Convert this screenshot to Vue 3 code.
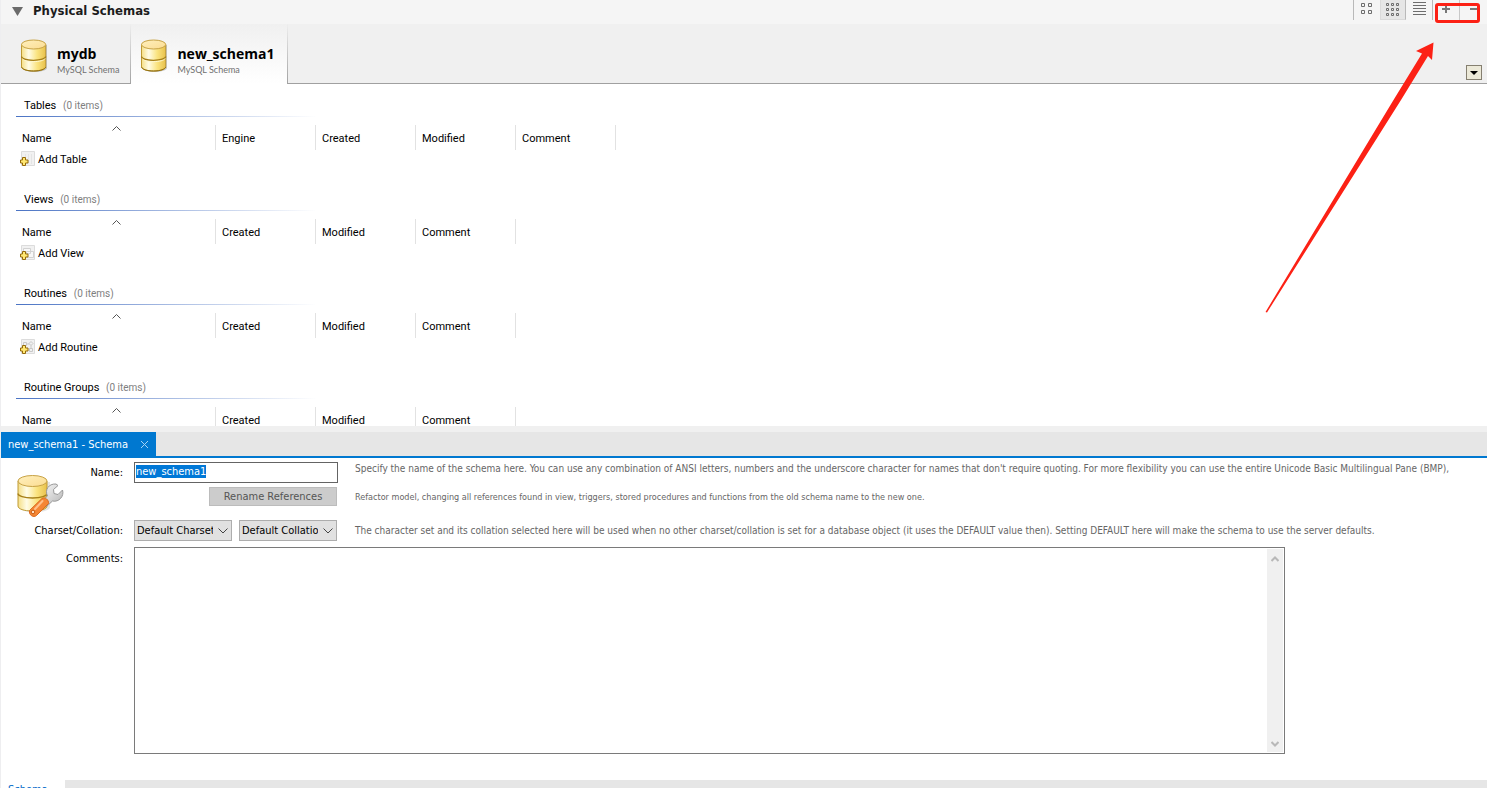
<script setup>
import { onMounted, ref } from 'vue'

const schemas = [
  { name: 'mydb', active: false },
  { name: 'new_schema1', active: true },
]

const sections = [
  { title: 'Tables', columns: ['Engine', 'Created', 'Modified', 'Comment'], add: 'Add Table', kind: 'table' },
  { title: 'Views', columns: ['Created', 'Modified', 'Comment'], add: 'Add View', kind: 'view' },
  { title: 'Routines', columns: ['Created', 'Modified', 'Comment'], add: 'Add Routine', kind: 'routine' },
  { title: 'Routine Groups', columns: ['Created', 'Modified', 'Comment'] },
]

const schemaName = ref('new_schema1')
const nameInput = ref(null)

onMounted(() => {
  nameInput.value.focus({ preventScroll: true })
  nameInput.value.select()
})
</script>

<template>
  <div class="workbench">
    <svg class="defs" width="0" height="0" aria-hidden="true">
      <defs>
        <linearGradient id="goldSide" x1="0" x2="1" y1="0" y2="0">
          <stop offset="0" stop-color="#f5df86" />
          <stop offset=".3" stop-color="#fffce6" />
          <stop offset=".65" stop-color="#fae37f" />
          <stop offset="1" stop-color="#e8c14b" />
        </linearGradient>
        <linearGradient id="goldTop" x1="0" x2="1" y1="0" y2="1">
          <stop offset="0" stop-color="#fff0bd" />
          <stop offset="1" stop-color="#fbdc92" />
        </linearGradient>
        <linearGradient id="steel" x1="0" x2="1" y1="0" y2="1">
          <stop offset="0" stop-color="#fafafa" />
          <stop offset="1" stop-color="#b4b4b4" />
        </linearGradient>
        <symbol id="cylinder" viewBox="0 0 28 34">
          <path d="M3 6v23c0 2 5 4 11.500 4S27 31 27 29V6z" fill="#000" opacity=".2" />
          <path d="M1.500 5.500v22.500c0 2.200 5 4 12 4s12.200-1.800 12.200-4V5.500z" fill="url(#goldSide)" stroke="#bf9a34" />
          <path d="M1.500 17.500c0 2.200 5 3.800 12 3.800s12.200-1.600 12.200-3.800" fill="none" stroke="#a67f18" stroke-width="1.300" />
          <path d="M2.300 19.500c1 2 5.500 3.100 11.300 3.100s10.500-1.100 11.500-3.100" fill="none" stroke="#fff8cf" />
          <ellipse cx="13.600" cy="5.500" rx="12.100" ry="4.500" fill="url(#goldTop)" stroke="#c7a245" />
          <path d="M1.600 28c.6 2.200 5.400 4 12 4s11.500-1.800 12.100-4" fill="none" stroke="#93700f" />
        </symbol>
      </defs>
    </svg>

    <section class="schemas">
      <header class="bar">
        <button class="collapse" type="button" aria-label="Collapse">
          <svg width="11" height="9"><path d="M0 0h11L5.500 9z" fill="#6b6b6b" /></svg>
        </button>
        <h1>Physical Schemas</h1>
        <div class="tools">
          <button class="tool" type="button" aria-label="Large icons">
            <svg width="12" height="12" fill="none" stroke="#6e6e6e">
              <path d="M.5 1.500h3v3h-3zM7.500 1.500h3v3h-3zM.5 8.500h3v3h-3zM7.500 8.500h3v3h-3z" />
            </svg>
          </button>
          <button class="tool pressed" type="button" aria-label="Small icons">
            <svg width="14" height="14" fill="none" stroke="#6e6e6e">
              <path d="M.5 1.500h2v2h-2zM5.500 1.500h2v2h-2zM10.500 1.500h2v2h-2zM.5 6.500h2v2h-2zM5.500 6.500h2v2h-2zM10.500 6.500h2v2h-2zM.5 11.500h2v2h-2zM5.500 11.500h2v2h-2zM10.500 11.500h2v2h-2z" />
            </svg>
          </button>
          <button class="tool" type="button" aria-label="List">
            <svg width="13" height="14" stroke="#6e6e6e"><path d="M0 .5h13M0 3.500h13M0 6.500h13M0 9.500h13M0 12.500h13" /></svg>
          </button>
          <span class="edit">
            <button class="tool" type="button" aria-label="Add schema">
              <svg width="8" height="8" stroke="#777" stroke-width="2"><path d="M4 0v8M0 4h8" /></svg>
            </button>
            <button class="tool" type="button" aria-label="Remove schema">
              <svg width="8" height="8" stroke="#777" stroke-width="2"><path d="M0 4h8" /></svg>
            </button>
            <span class="highlight"></span>
          </span>
        </div>
      </header>

      <nav class="tabs">
        <button v-for="s in schemas" :key="s.name" type="button" class="tab" :class="{ active: s.active }">
          <svg width="28" height="34"><use href="#cylinder" /></svg>
          <span class="tab-text">
            <strong>{{ s.name }}</strong>
            <small>MySQL Schema</small>
          </span>
        </button>
        <div class="tab-rest">
          <button class="more" type="button" aria-label="More schemas">
            <svg width="8" height="4"><path d="M0 0h8L4 4z" /></svg>
          </button>
        </div>
      </nav>

      <div class="objects">
        <article v-for="s in sections" :key="s.title" class="group">
          <h2>{{ s.title }} <span>(0 items)</span></h2>
          <table>
            <thead>
              <tr>
                <th class="first">
                  Name
                  <svg class="sort" width="9" height="5" fill="none" stroke="#555"><path d="M.5 4.500l4-4 4 4" /></svg>
                </th>
                <th v-for="c in s.columns" :key="c">{{ c }}</th>
              </tr>
            </thead>
          </table>
          <button v-if="s.add" type="button" class="add">
            <svg width="16" height="16" fill="none">
              <path d="M1.500.5h13v14h-13z" fill="#f1f1f1" stroke="#dcdcdc" />
              <path v-if="s.kind === 'table'" d="M5.500 3v10M8.500 3v10M11.500 3v10" stroke="#e4e4e4" />
              <path v-if="s.kind === 'view'" d="M3.500 3.500h7v5h-7zM6.500 6.500h7v6h-7z" fill="#f8f8f8" stroke="#d2d2d2" />
              <path v-if="s.kind === 'routine'" d="M3.500 3.500h3v3h-3zM9.500 9.500h3v3h-3zM6.500 5h3M11 6.500v3M11 2.500l2 2-2 2-2-2z" stroke="#c8c8c8" />
              <path d="M2.500 6.500h3v2.500h2.500v3h-2.500v2.500h-3v-2.500H.5v-3h2z" fill="#ffe873" stroke="#94690a" />
            </svg>
            <span>{{ s.add }}</span>
          </button>
        </article>
      </div>

      <svg class="arrow" width="170" height="274" viewBox="0 0 170 274" aria-hidden="true">
        <path d="M.5 270L128.500 58L157 11.500L151 9L168.500 .5L167 18L163 14L136 58L2 270.500z" fill="#fc2115" />
      </svg>
    </section>

    <section class="editor">
      <nav class="doc-tabs">
        <button type="button" class="doc-tab">
          <span>new_schema1 - Schema</span>
          <svg width="9" height="9" stroke="#a5d2f3"><path d="M1 1l7 7M8 1L1 8" /></svg>
        </button>
      </nav>

      <form class="form" @submit.prevent>
        <svg class="schema-icon" width="48" height="44" viewBox="0 0 48 44" aria-hidden="true">
          <path d="M2 8v25c0 3 7 5 16 5s15-2 15-5V8z" fill="#000" opacity=".1" />
          <path d="M1 7v25c0 3 6 5 14.500 5S30 35 30 32V7z" fill="url(#goldSide)" stroke="#bf9a34" />
          <path d="M1 19.500c0 2.500 6 4.500 14.500 4.500S30 22 30 19.500" fill="none" stroke="#a67f18" stroke-width="1.300" />
          <ellipse cx="15.500" cy="7" rx="14.500" ry="5.500" fill="url(#goldTop)" stroke="#c7a245" />
          <path d="M24.500 27.500l6-5.500c-3-6 1-12.500 8.500-12l2 1.500-4.500 4 .5 4 4 1 4.500-4.500c2 6-3.500 12.500-10 11l-6 5.500z" fill="url(#steel)" stroke="#999" />
          <path d="M25 24.500c3-2 7 1.500 6.500 5L19.500 41.500c-3 2.500-8-.5-7-5z" fill="#f58634" stroke="#d9691f" />
          <path d="M25.500 27L18 35" stroke="#ffc08a" stroke-width="2" stroke-linecap="round" />
          <circle cx="16" cy="38" r="1.800" fill="#ffe0c0" stroke="#c95b13" />
        </svg>

        <label class="label" for="schema-name">Name:</label>
        <input id="schema-name" ref="nameInput" v-model="schemaName" class="name" type="text" spellcheck="false" />
        <p class="help top">Specify the name of the schema here. You can use any combination of ANSI letters, numbers and the underscore character for names that don't require quoting. For more flexibility you can use the entire Unicode Basic Multilingual Pane (BMP),</p>

        <button class="rename" type="button" disabled>Rename References</button>
        <p class="help small">Refactor model, changing all references found in view, triggers, stored procedures and functions from the old schema name to the new one.</p>

        <label class="label" for="charset">Charset/Collation:</label>
        <div class="selects">
          <div class="select">
            <select id="charset"><option>Default Charset</option></select>
            <svg width="10" height="6" fill="none" stroke="#444"><path d="M.5.5L5 5 9.500.5" /></svg>
          </div>
          <div class="select">
            <select aria-label="Collation"><option>Default Collation</option></select>
            <svg width="10" height="6" fill="none" stroke="#444"><path d="M.5.5L5 5 9.500.5" /></svg>
          </div>
        </div>
        <p class="help row-3">The character set and its collation selected here will be used when no other charset/collation is set for a database object (it uses the DEFAULT value then). Setting DEFAULT here will make the schema to use the server defaults.</p>

        <label class="label" for="comments">Comments:</label>
        <div class="comments">
          <textarea id="comments"></textarea>
          <div class="scroll">
            <svg width="8" height="6" fill="none" stroke="#b8b8b8" stroke-width="2"><path d="M.5 5L4 1.500 7.500 5" /></svg>
            <svg width="8" height="6" fill="none" stroke="#b8b8b8" stroke-width="2"><path d="M.5 1L4 4.500 7.500 1" /></svg>
          </div>
        </div>
      </form>

      <footer class="page-tabs">
        <button type="button">Schema</button>
      </footer>
    </section>
  </div>
</template>

<style>
body {
  margin: 0;
}
</style>

<style scoped>
.workbench {
  box-sizing: border-box;
  display: flex;
  flex-direction: column;
  height: 100vh;
  overflow: hidden;
  border-left: 1px solid #eeeef0;
  background: #fff;
  color: #000;
  font: 11px/14px "DejaVu Sans Condensed", "Noto Sans", sans-serif;
}
.workbench * {
  box-sizing: border-box;
}
.defs {
  position: absolute;
}
button {
  border: 0;
  padding: 0;
  background: none;
  color: inherit;
  font: inherit;
}
h1, h2, p {
  margin: 0;
}
.schemas {
  position: relative;
  flex: 1 1 0;
  min-height: 0;
  display: flex;
  flex-direction: column;
}
.bar {
  flex: none;
  display: flex;
  align-items: flex-start;
  height: 24px;
  padding-left: 11px;
  background: #f5f5f5;
}
.collapse {
  display: flex;
  padding-top: 7px;
}
h1 {
  padding: 2px 0 0 10px;
  font-size: 13px;
  line-height: 17px;
  font-weight: bold;
  color: #1c1c1c;
}
.tools {
  display: flex;
  margin-left: auto;
  height: 20px;
  border-left: 1px solid #b9b9b9;
}
.tool {
  display: flex;
  justify-content: center;
  align-items: flex-start;
  width: 26px;
  padding-top: 2px;
}
.tool.pressed {
  background: #e6e6e6;
  border: 1px solid #dadada;
  border-top: 0;
  border-right-color: #b9b9b9;
}
.edit {
  position: relative;
  display: flex;
  border-left: 1px solid #b9b9b9;
}
.edit .tool {
  padding-top: 5px;
}
.edit .tool + .tool {
  width: 28px;
  border-left: 1px solid #c8c8c8;
}
.highlight {
  position: absolute;
  left: 2px;
  top: 3px;
  width: 45px;
  height: 20px;
  border: 3px solid #fc2115;
  border-radius: 3px;
}
.tabs {
  flex: none;
  display: flex;
  height: 60px;
  background: #f0f0f0;
}
.tab {
  display: flex;
  align-items: flex-start;
  gap: 9px;
  padding: 15px 11px 0 19px;
  border-bottom: 1px solid #a0a0a0;
  text-align: left;
}
.tab.active {
  padding: 15px 13px 0 9px;
  border-left: 1px solid;
  border-right: 1px solid;
  border-image: linear-gradient(#f0f0f0, #a0a0a0) 1;
  border-bottom: 0;
  background: linear-gradient(#f0f0f0, #fff);
}
.tab-text {
  display: flex;
  flex-direction: column;
  padding-top: 5px;
}
.tab-text strong {
  font: bold 14px/19px "Open Sans", "Noto Sans", sans-serif;
}
.tab-text small {
  padding-top: 1px;
  font: 9px/12px Lato, "Open Sans", sans-serif;
  color: #707070;
}
.tab-rest {
  flex: 1;
  display: flex;
  justify-content: flex-end;
  align-items: flex-end;
  padding: 0 5px 3px 0;
  border-bottom: 1px solid #a0a0a0;
}
.more {
  display: flex;
  align-items: center;
  justify-content: center;
  width: 16px;
  height: 15px;
  border: 1px solid #857f70;
  background: #ece9d8;
}
.objects {
  flex: 1 1 0;
  min-height: 0;
  overflow: hidden;
  padding-left: 15px;
  font-family: Roboto, "Liberation Sans", sans-serif;
}
.group {
  height: 94px;
  padding-top: 15px;
}
h2 {
  width: 300px;
  height: 18px;
  padding-left: 8px;
  border-bottom: 1px solid;
  border-image: linear-gradient(90deg, #4a73c4, #fff) 1;
  font-size: 11px;
  line-height: 14px;
  font-weight: normal;
}
h2 span {
  padding-left: 4px;
  font-size: 10px;
  color: #808080;
}
table {
  margin-top: 8px;
  border-collapse: separate;
  border-spacing: 0;
  table-layout: fixed;
  width: 0;
}
th {
  position: relative;
  width: 100px;
  height: 25px;
  padding: 2px 0 0 6px;
  border-right: 1px solid #e2e2e2;
  font-weight: normal;
  text-align: left;
}
th.first {
  width: 200px;
}
.sort {
  position: absolute;
  left: 96px;
  top: 1px;
}
.add {
  display: flex;
  align-items: center;
  gap: 2px;
  height: 18px;
  padding-left: 4px;
}
.add span,
.doc-tab span {
  padding-top: 2px;
}
.arrow {
  position: absolute;
  right: 52px;
  top: 42px;
}
.editor {
  flex: none;
  border-top: 6px solid #f0f0f0;
}
.doc-tabs {
  display: flex;
  height: 26px;
  border-bottom: 2px solid #0078d0;
  background: #e6e6e6;
}
.doc-tab {
  display: flex;
  align-items: center;
  gap: 12px;
  padding: 0 7px;
  background: #0078d0;
  color: #fff;
}
.form {
  display: grid;
  grid-template-columns: 122px 215px minmax(0, 1fr);
  grid-template-rows: 21px 19px 33px auto;
  row-gap: 4px;
  align-items: center;
  padding: 4px 0 26px;
}
.schema-icon {
  grid-area: 1 / 1 / 3 / 2;
  align-self: start;
  margin: 12px 0 0 16px;
}
.label {
  grid-column: 1;
  text-align: right;
}
.label[for="schema-name"] {
  grid-row: 1;
}
.label[for="charset"],
.selects,
.help.row-3 {
  padding-top: 8px;
}
.label[for="comments"] {
  align-self: start;
  padding-top: 5px;
}
.name,
.rename,
.selects {
  grid-column: 2;
  margin-left: 11px;
}
.name {
  grid-row: 1;
  height: 21px;
  border: 1px solid #646464;
  padding: 0 1px 2px;
  font: inherit;
  outline: 0;
  background: #fff;
}
.name::selection {
  background: #0078d7;
  color: #fff;
}
.rename {
  grid-row: 2;
  justify-self: end;
  width: 128px;
  height: 19px;
  margin-right: 1px;
  border: 1px solid #bcbcbc;
  background: #ccc;
  color: #555;
}
.help {
  grid-column: 3;
  padding-left: 17px;
  font-size: 10px;
  white-space: nowrap;
  color: #666;
}
.help.top {
  padding-bottom: 8px;
}
.help.small {
  font-size: 9px;
}
.selects {
  display: flex;
  gap: 7px;
  margin-right: 1px;
}
.select {
  position: relative;
  display: flex;
  flex: 1;
}
.select select {
  appearance: none;
  width: 98px;
  height: 21px;
  padding: 0 18px 0 2px;
  border: 1px solid #adadad;
  border-radius: 0;
  background: #e1e1e1;
  color: #000;
  font: inherit;
}
.select svg {
  position: absolute;
  right: 4px;
  top: 8px;
  pointer-events: none;
}
.comments {
  grid-column: 2 / 4;
  display: flex;
  height: 207px;
  margin: 0 202px 0 11px;
  padding: 1px;
  border: 1px solid #7a7a7a;
}
.comments textarea {
  flex: 1;
  border: 0;
  padding: 2px;
  outline: 0;
  resize: none;
  font: inherit;
}
.scroll {
  display: flex;
  flex-direction: column;
  justify-content: space-between;
  align-items: center;
  width: 16px;
  padding: 7px 0 5px;
  background: #f0f0f0;
}
.page-tabs {
  display: flex;
  align-items: flex-start;
  height: 8px;
  overflow: hidden;
  background: #e6e6e6;
}
.page-tabs button {
  width: 64px;
  padding: 3px 0 0 7px;
  background: #fff;
  color: #0068c8;
  text-align: left;
}
</style>
